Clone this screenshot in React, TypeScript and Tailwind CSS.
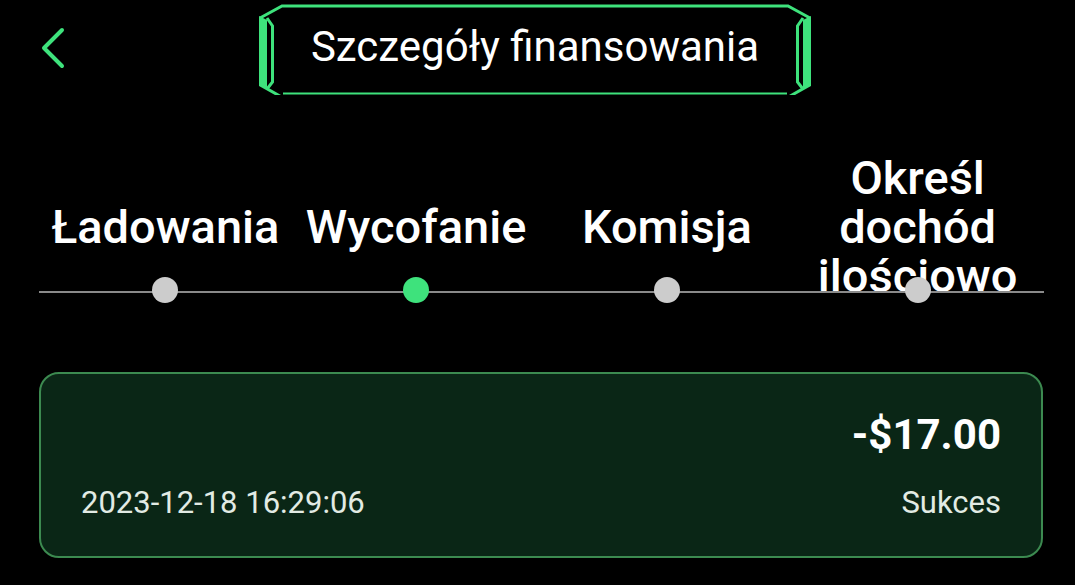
import React from "react";

const tabs = [
  { label: "Ładowania", active: false },
  { label: "Wycofanie", active: true },
  { label: "Komisja", active: false },
  { label: "Określ dochód ilościowo", active: false },
];

function TitleFrame() {
  return (
    <svg
      className="absolute inset-0 h-full w-full"
      viewBox="0 0 552 92"
      fill="none"
    >
      {/* top + bottom lines */}
      <path d="M1 14 L23 2 H529 L551 14" stroke="#3ee27c" strokeWidth="3" />
      <path d="M24 89.5 H528" stroke="#3ee27c" strokeWidth="2" />
      {/* left bracket */}
      <path d="M0 12 L8 16 L8 83 L22 91 L16 91 L0 82 Z" fill="#3ee27c" />
      <path d="M8 14 L13.5 22 L13.5 78 L8 85" stroke="#3ee27c" strokeWidth="3" />
      {/* right bracket */}
      <path d="M552 12 L544 16 L544 83 L530 91 L536 91 L552 82 Z" fill="#3ee27c" />
      <path d="M544 14 L538.5 22 L538.5 78 L544 85" stroke="#3ee27c" strokeWidth="3" />
    </svg>
  );
}

export default function App() {
  return (
    <div
      className="h-[585px] w-[1075px] overflow-hidden bg-black text-white"
      style={{ fontFamily: "Roboto, 'Noto Sans', sans-serif" }}
    >
      {/* Header */}
      <header className="relative flex h-[100px] items-start justify-center pt-[4px]">
        <button className="absolute left-[38px] top-[26px] text-[#3ee27c]">
          <svg width="30" height="44" viewBox="0 0 30 44" fill="none">
            <path
              d="M24 4 L6 22 L24 40"
              stroke="currentColor"
              strokeWidth="4"
              strokeLinecap="round"
              strokeLinejoin="round"
            />
          </svg>
        </button>
        <div className="relative ml-[-5px] flex h-[92px] w-[552px] items-center justify-center">
          <TitleFrame />
          <span className="relative mt-[-6px] text-[42px] leading-none">
            Szczegóły finansowania
          </span>
        </div>
      </header>

      {/* Tabs */}
      <div className="relative mx-[40px] mt-[102px] w-[1003px]">
        <div className="absolute left-[-1px] right-[-1px] top-[89px] z-10 h-[2px] bg-[#8a8a8a]" />
        <div className="grid grid-cols-4">
          {tabs.map((t) => (
            <div key={t.label} className="flex flex-col items-center">
              <div className="flex h-[48px] items-center justify-center">
                <span className="w-[240px] text-center text-[47px] font-medium leading-[49px]">
                  {t.label}
                </span>
              </div>
              <div
                className={
                  "relative z-20 mt-[27px] h-[26px] w-[26px] rounded-full " +
                  (t.active ? "bg-[#3ee27c]" : "bg-[#cccccc]")
                }
              />
            </div>
          ))}
        </div>
      </div>

      {/* Card */}
      <div className="mx-[39px] mt-[69px] flex h-[186px] w-[1004px] flex-col justify-between rounded-[20px] border-2 border-[#3c8a50] bg-[#0a2616] px-[40px] pb-[38px] pt-[40px]">
        <div className="text-right text-[42px] font-bold leading-none">
          -$17.00
        </div>
        <div className="flex items-end justify-between text-[31px] leading-none text-[#e2ebe4]">
          <span>2023-12-18 16:29:06</span>
          <span>Sukces</span>
        </div>
      </div>
    </div>
  );
}
